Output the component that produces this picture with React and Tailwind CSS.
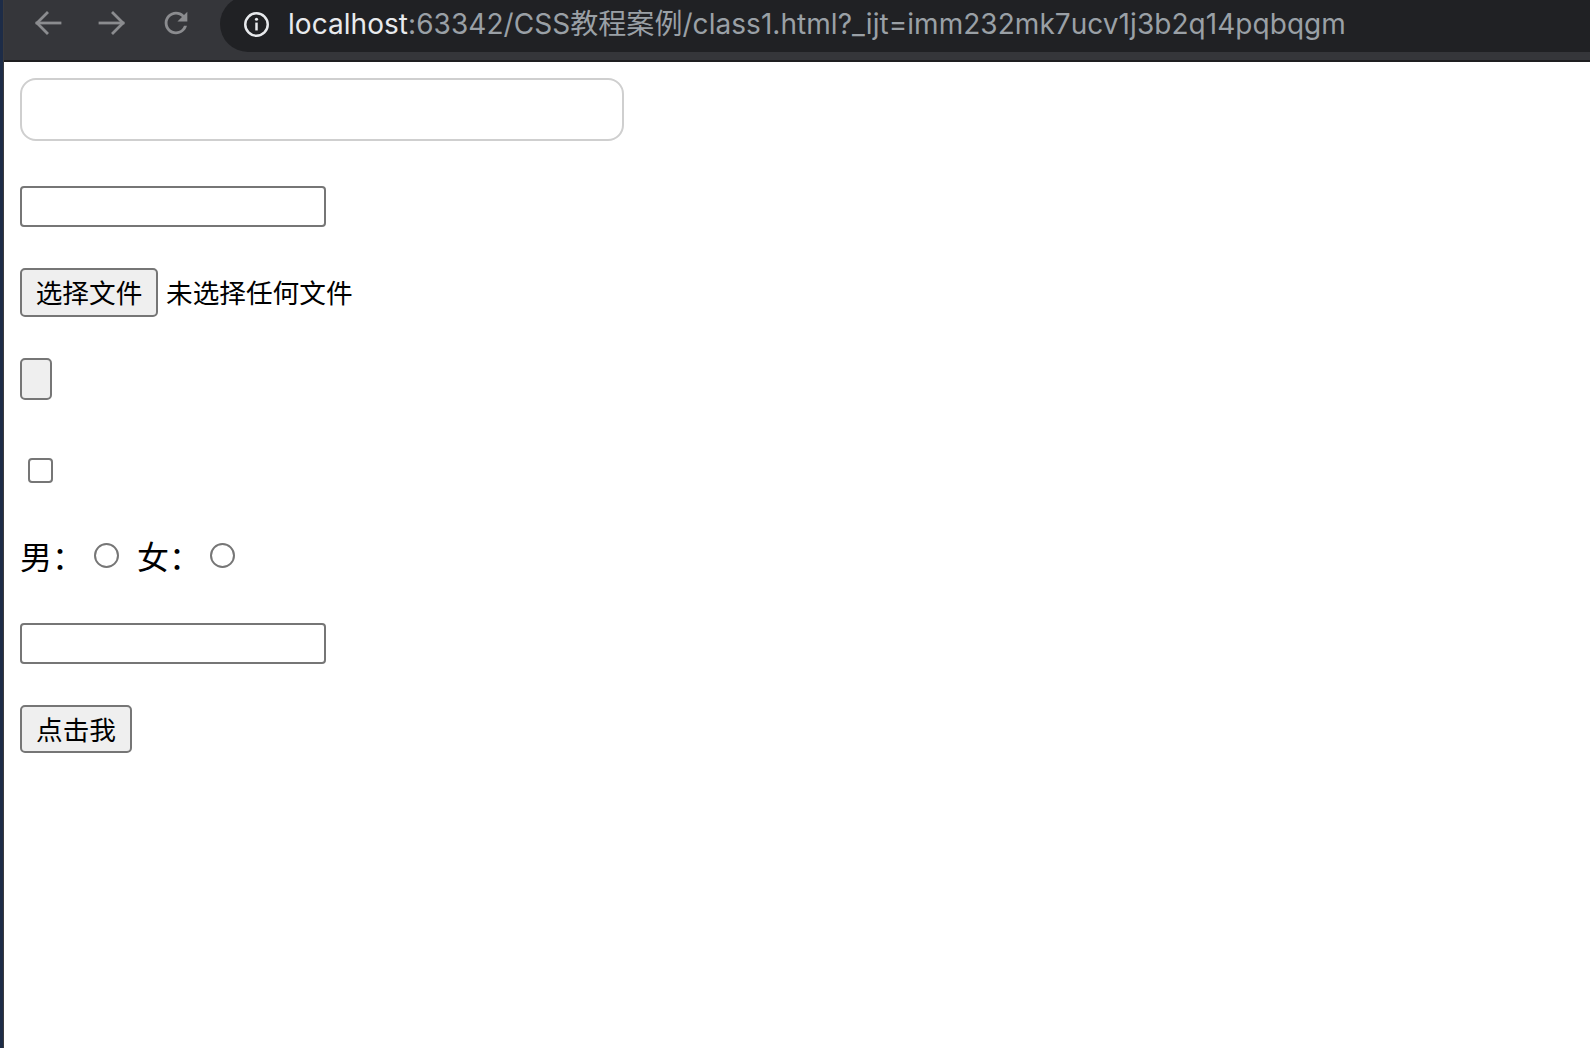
import React from 'react';

// Chrome-style toolbar icons
function BackIcon() {
  return (
    <svg width="28" height="26" viewBox="0 0 28 26" fill="none" stroke="#8b8c8f" strokeWidth="2.8" strokeLinecap="square">
      <path d="M3 13h23" />
      <path d="M13 3L3 13l10 10" />
    </svg>
  );
}

function ForwardIcon() {
  return (
    <svg width="28" height="26" viewBox="0 0 28 26" fill="none" stroke="#8b8c8f" strokeWidth="2.8" strokeLinecap="square">
      <path d="M2 13h23" />
      <path d="M15 3l10 10-10 10" />
    </svg>
  );
}

function ReloadIcon() {
  return (
    <svg width="34" height="34" viewBox="0 0 24 24" fill="#8b8c8f">
      <path d="M17.65 6.35A7.958 7.958 0 0 0 12 4c-4.42 0-7.990 3.58-7.99 8s3.57 8 7.99 8c3.73 0 6.84-2.55 7.730-6h-2.08A5.99 5.99 0 0 1 12 18c-3.31 0-6-2.69-6-6s2.69-6 6-6c1.66 0 3.14.69 4.22 1.78L13 11h7V4l-2.35 2.35z" />
    </svg>
  );
}

function InfoIcon() {
  return (
    <svg width="27" height="27" viewBox="0 0 24 24" fill="none">
      <circle cx="12" cy="12" r="10" stroke="#e8eaed" strokeWidth="2.2" />
      <rect x="10.9" y="10.3" width="2.2" height="7" fill="#e8eaed" />
      <circle cx="12" cy="7.3" r="1.4" fill="#e8eaed" />
    </svg>
  );
}

export default function App() {
  const cjk = "font-['Noto_Sans_CJK_SC',sans-serif]";

  return (
    <div className="flex w-[1590px] h-[1048px] overflow-hidden bg-white">
      {/* desktop edge */}
      <div className="w-[3px] bg-[#1d2c47]" />
      <div className="w-px bg-[#3b3b3d]" />

      <div className="flex-1 flex flex-col">
        {/* Toolbar */}
        <div className="h-[60px] bg-[#35363a] flex items-start pl-[12px]">
          <div className="w-[64px] h-[46px] flex items-center justify-center"><BackIcon /></div>
          <div className="w-[64px] h-[46px] flex items-center justify-center"><ForwardIcon /></div>
          <div className="w-[64px] h-[46px] flex items-center justify-center"><ReloadIcon /></div>

          <div className="ml-[12px] -mt-[4px] h-[56px] flex-1 rounded-l-[28px] bg-[#202124] flex items-center pl-[23px] gap-[18px] font-['Inter','Noto_Sans_CJK_SC',sans-serif] text-[28px] tracking-[0.05px] whitespace-nowrap">
            <InfoIcon />
            <div>
              <span className="text-[#e8eaed]">localhost</span>
              <span className="text-[#9aa0a6]">:63342/CSS教程案例/class1.html?_ijt=imm232mk7ucv1j3b2q14pqbqgm</span>
            </div>
          </div>
        </div>
        <div className="h-[2px] bg-[#1e1e20]" />

        {/* Page */}
        <div className={`flex-1 bg-white pl-4 pt-4 flex flex-col items-start text-black ${cjk}`}>
          <input type="text" className="w-[604px] h-[63px] border-2 border-[#cfcfcf] rounded-[16px] bg-white outline-none" />

          <input type="text" className="mt-[45px] w-[306px] h-[41px] border-2 border-[#767676] rounded-[4px] bg-white outline-none" />

          <div className="mt-[41px] flex items-center h-[49px]">
            <button type="button" className="w-[138px] h-[49px] bg-[#efefef] border-2 border-[#767676] rounded-[5px] text-[26.67px] leading-none flex items-center justify-center">
              选择文件
            </button>
            <span className="ml-[8px] text-[26.67px] leading-none">未选择任何文件</span>
          </div>

          <button type="button" className="mt-[41px] w-[32px] h-[42px] bg-[#efefef] border-2 border-[#767676] rounded-[5px]" />

          <input type="checkbox" className="mt-[58px] ml-[8px] w-[25px] h-[25px] appearance-none border-2 border-[#767676] rounded-[4px] bg-white" />

          <div className="mt-[54px] h-[36px] flex items-center text-[32px] leading-[36px]">
            <span>男：</span>
            <input type="radio" name="sex" className="ml-[10px] w-[25px] h-[25px] appearance-none border-2 border-[#767676] rounded-full bg-white" />
            <span className="ml-[18px]">女：</span>
            <input type="radio" name="sex" className="ml-[9px] w-[25px] h-[25px] appearance-none border-2 border-[#767676] rounded-full bg-white" />
          </div>

          <input type="text" className="mt-[50px] w-[306px] h-[41px] border-2 border-[#767676] rounded-[4px] bg-white outline-none" />

          <button type="button" className="mt-[41px] w-[112px] h-[48px] bg-[#efefef] border-2 border-[#767676] rounded-[5px] text-[26.67px] leading-none flex items-center justify-center">
            点击我
          </button>
        </div>
      </div>
    </div>
  );
}
